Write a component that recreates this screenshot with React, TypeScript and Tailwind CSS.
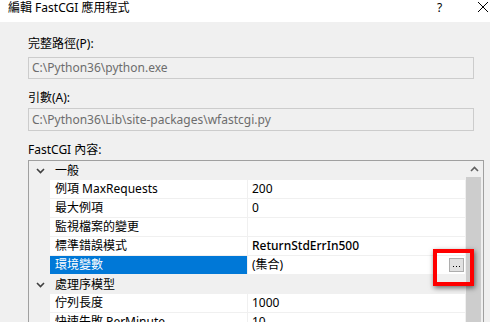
const FONT = "font-['Noto_Sans','Noto_Sans_CJK_TC',sans-serif]";

type Row =
  | { kind: "cat"; label: string }
  | { kind: "prop"; name: string; value: string; bold?: boolean; selected?: boolean; button?: boolean };

const ROWS: Row[] = [
  { kind: "cat", label: "一般" },
  { kind: "prop", name: "例項 MaxRequests", value: "200" },
  { kind: "prop", name: "最大例項", value: "0" },
  { kind: "prop", name: "監視檔案的變更", value: "" },
  { kind: "prop", name: "標準錯誤模式", value: "ReturnStdErrIn500", bold: true },
  { kind: "prop", name: "環境變數", value: "(集合)", selected: true, button: true },
  { kind: "cat", label: "處理序模型" },
  { kind: "prop", name: "佇列長度", value: "1000" },
  { kind: "prop", name: "快速失敗 PerMinute", value: "10" },
];

function Chevron() {
  return (
    <svg width="9" height="6" viewBox="0 0 9 6" className="shrink-0">
      <path d="M1 1 L4.5 4.5 L8 1" fill="none" stroke="#404040" strokeWidth="1.6" />
    </svg>
  );
}

function GridRow({ row }: { row: Row }) {
  if (row.kind === "cat") {
    return (
      <div className="h-[19px] flex items-center bg-[#f0f0f0]">
        <div className="w-[21px] flex justify-center pl-[2px]">
          <Chevron />
        </div>
        <span className="pl-[5px] text-[12px] leading-[19px] text-black">{row.label}</span>
      </div>
    );
  }
  return (
    <div className="h-[19px] flex">
      <div className="w-[21px] bg-[#f0f0f0]" />
      <div
        className={`w-[197px] pl-[5px] text-[12px] leading-[18px] border-b border-[#f0f0f0] ${
          row.selected ? "bg-[#0078d7] text-white border-[#0078d7]" : "bg-white text-black"
        }`}
      >
        {row.name}
      </div>
      <div className="w-px bg-[#f0f0f0]" />
      <div
        className={`relative flex-1 pl-[4px] text-[12px] leading-[18px] bg-white text-black border-b border-[#f0f0f0] ${
          row.bold ? "font-medium" : ""
        }`}
      >
        {row.value}
        {row.button && (
          <>
            <div className="absolute right-[1px] top-[2px] w-[15px] h-[14px] bg-[#e1e1e1] border border-[#adadad] flex items-center justify-center gap-[2px] pt-[3px]">
              <span className="w-[1px] h-[1px] bg-black" />
              <span className="w-[1px] h-[1px] bg-black" />
              <span className="w-[1px] h-[1px] bg-black" />
            </div>
            <div className="absolute -right-[9px] -top-[7px] w-[41px] h-[37px] border-[4px] border-[#ff0000] shadow-[1px_2px_5px_rgba(0,0,0,0.55)]" />
          </>
        )}
      </div>
    </div>
  );
}

export default function App() {
  return (
    <div className={`w-[490px] h-[322px] overflow-hidden bg-[#f0f0f0] ${FONT}`}>
      {/* title bar */}
      <div className="h-[22px] bg-white flex items-start relative">
        <span className="pl-[8px] text-[12px] leading-[16px] text-black">編輯 FastCGI 應用程式</span>
        <span className="absolute left-[437px] top-0 text-[12px] leading-[16px] text-black">?</span>
        <svg width="12" height="12" viewBox="0 0 12 12" className="absolute left-[477px] top-[1px]">
          <path d="M1 1 L11 11 M11 1 L1 11" stroke="#000" strokeWidth="1" />
        </svg>
      </div>

      <div className="pl-[28px] pt-[14px]">
        <div className="h-[16px] text-[12px] leading-[16px] text-black">完整路徑(P):</div>
        <div className="mt-[5px] w-[446px] h-[22px] border border-[#cccccc] px-[3px] text-[12px] leading-[20px] text-[#6d6d6d]">
          C:\Python36\python.exe
        </div>

        <div className="mt-[11px] h-[16px] text-[12px] leading-[16px] text-black">引數(A):</div>
        <div className="mt-[2px] w-[446px] h-[23px] border border-[#cccccc] px-[3px] text-[12px] leading-[21px] text-[#6d6d6d]">
          C:\Python36\Lib\site-packages\wfastcgi.py
        </div>

        <div className="mt-[11px] h-[16px] text-[12px] leading-[16px] text-black">FastCGI 內容:</div>
        <div className="mt-[2px] w-[456px] h-[200px] border border-[#a0a0a0] flex">
          <div className="w-[436px] flex flex-col">
            {ROWS.map((r, i) => (
              <GridRow key={i} row={r} />
            ))}
          </div>
          <div className="w-[18px] flex flex-col bg-[#f0f0f0]">
            <div className="h-[16px] flex items-center justify-center">
              <svg width="9" height="6" viewBox="0 0 9 6">
                <path d="M1 5 L4.5 1.5 L8 5" fill="none" stroke="#606060" strokeWidth="1.6" />
              </svg>
            </div>
            <div className="ml-[1px] w-[15px] flex-1 bg-[#cdcdcd]" />
          </div>
        </div>
      </div>
    </div>
  );
}
